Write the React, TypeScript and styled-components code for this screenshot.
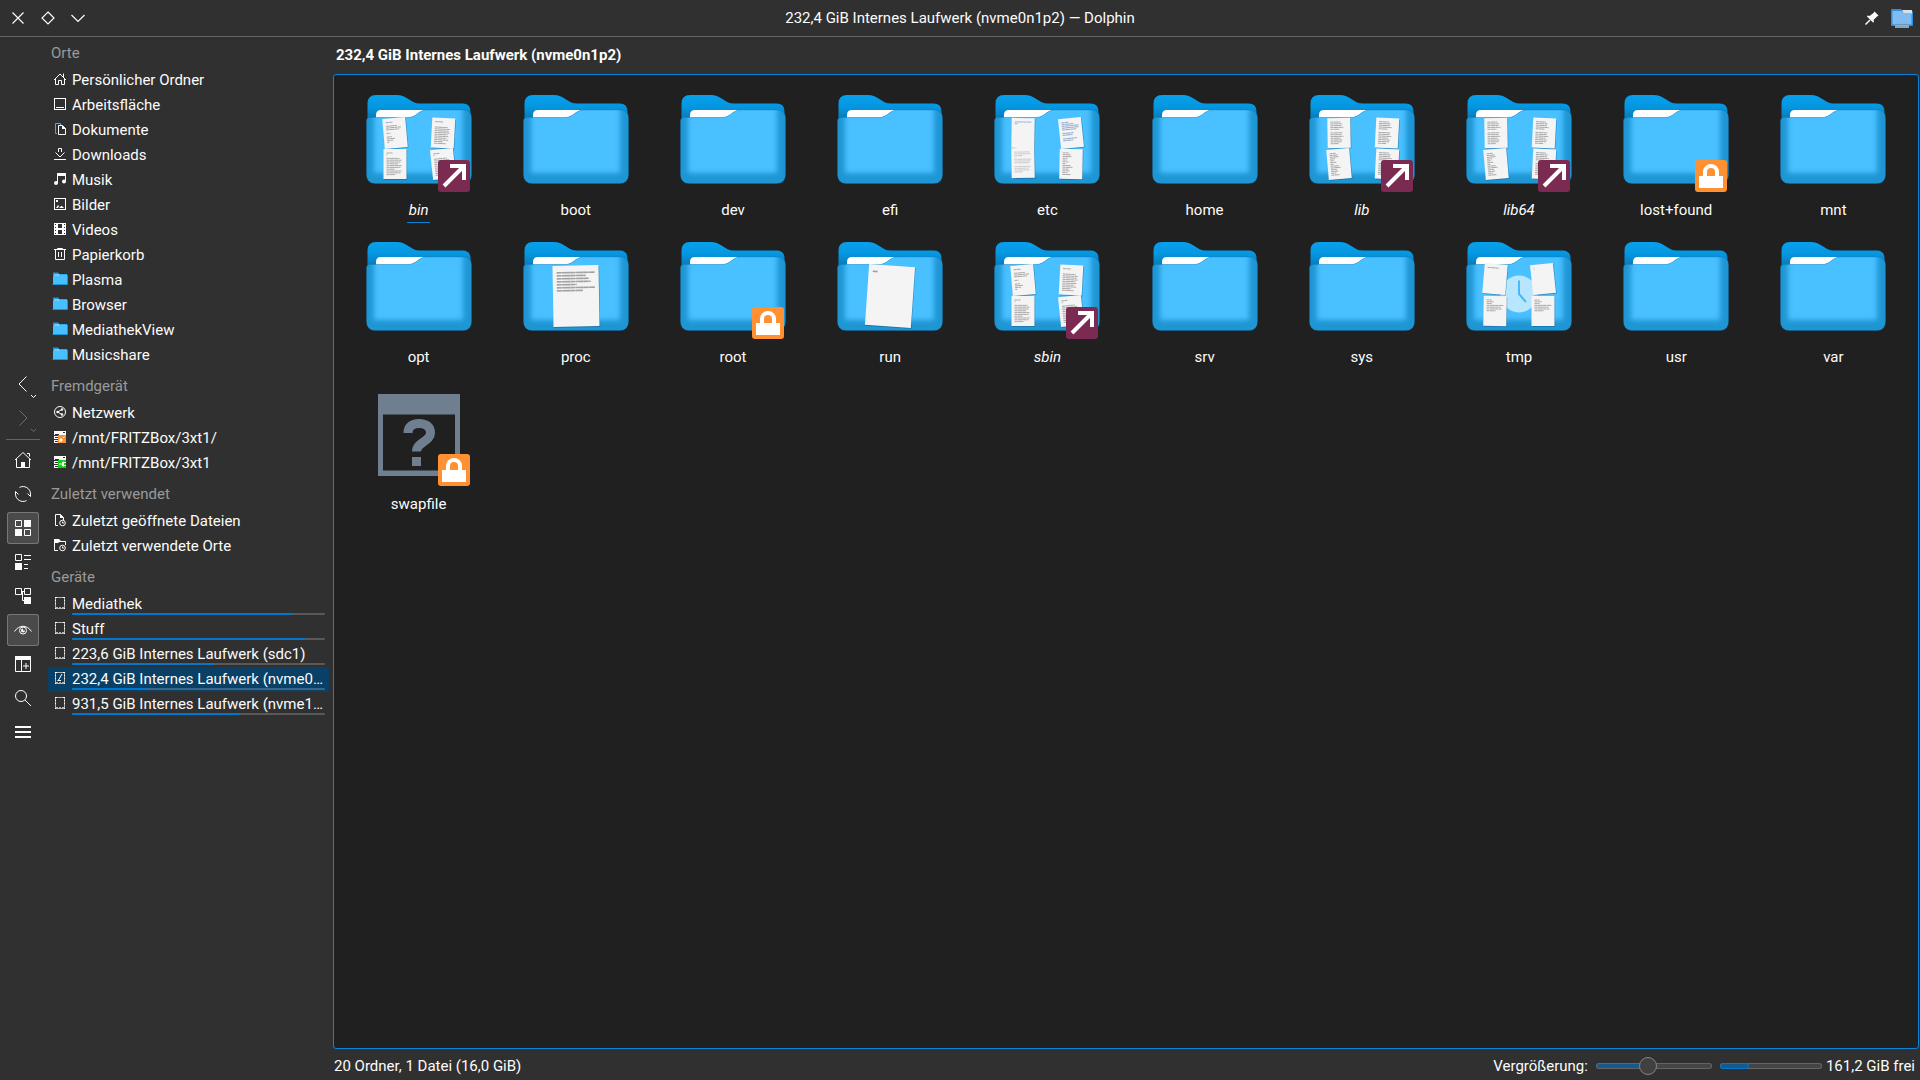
import React, { useState } from "react";
import styled, { createGlobalStyle, css } from "styled-components";

const color = {
  window: "#303030",
  view: "#202020",
  line: "#646464",
  text: "#fcfcfc",
  muted: "#9a9a9a",
  accent: "#0078d0",
  focus: "#0a84d8",
  selected: "#0a3f66",
};

const GlobalStyle = createGlobalStyle`
  * { box-sizing: border-box; }
  html, body, #root { height: 100%; }
  body {
    margin: 0;
    background: ${color.window};
    color: ${color.text};
    font-family: Roboto, "Noto Sans", sans-serif;
    font-size: 15px;
    line-height: 18px;
  }
  button, input { font: inherit; color: inherit; }
  svg { display: block; flex: none; }
`;

const Window = styled.div`
  display: flex;
  flex-direction: column;
  height: 100vh;
  overflow: hidden;
  background: ${color.window};
`;

const TitleBar = styled.header`
  display: grid;
  grid-template-columns: 1fr auto 1fr;
  align-items: center;
  height: 37px;
  flex: none;
  padding: 0 3px;
  border-bottom: 1px solid ${color.line};
`;

const TitleGroup = styled.div<{ $end?: boolean }>`
  display: flex;
  justify-content: ${(p) => (p.$end ? "flex-end" : "flex-start")};
`;

const TitleText = styled.h1`
  margin: 0;
  font-size: 15px;
  font-weight: 400;
`;

const TitleButton = styled.button`
  display: grid;
  place-items: center;
  width: 30px;
  height: 30px;
  padding: 0;
  border: 0;
  background: none;
`;

const Body = styled.div`
  display: flex;
  flex: 1;
  min-height: 0;
`;

const ToolBar = styled.div`
  display: flex;
  flex-direction: column;
  align-items: center;
  justify-content: center;
  gap: 2px;
  width: 46px;
  flex: none;
  padding-bottom: 1px;
`;

const ToolButton = styled.button<{ $checked?: boolean }>`
  display: grid;
  place-items: center;
  width: 32px;
  height: 32px;
  padding: 0;
  border: 0;
  border-radius: 3px;
  background: none;
  ${(p) =>
    p.$checked &&
    css`
      background: #4a4a4a;
      box-shadow: inset 0 0 0 1px #777;
    `}
  &:disabled { opacity: 0.3; }
`;

const ToolSeparator = styled.hr`
  width: 34px;
  height: 1px;
  margin: 3px 0 2px;
  border: 0;
  background: ${color.line};
`;

const Places = styled.nav`
  display: flex;
  flex-direction: column;
  gap: 8px;
  width: 281px;
  flex: none;
  margin: 0 4px 0 2px;
  padding-top: 6px;
`;

const SectionTitle = styled.h2`
  margin: 0 0 5px;
  padding-left: 3px;
  font-size: 15px;
  font-weight: 400;
  line-height: 20px;
  color: ${color.muted};
`;

const PlaceList = styled.ul`
  margin: 0;
  padding: 0;
  list-style: none;
`;

const PlaceLink = styled.a<{ $selected?: boolean }>`
  display: flex;
  gap: 4px;
  height: 25px;
  padding: 3px 4px 0;
  color: inherit;
  text-decoration: none;
  background: ${(p) => (p.$selected ? color.selected : "transparent")};
`;

const PlaceBody = styled.span`
  flex: 1;
  min-width: 0;
`;

const PlaceName = styled.span`
  display: block;
  white-space: nowrap;
`;

const UsageTrack = styled.span<{ $selected?: boolean }>`
  display: block;
  height: 2px;
  border-radius: 1px;
  overflow: hidden;
  background: ${(p) => (p.$selected ? "#3b6585" : "#595959")};
`;

const UsageFill = styled.span`
  display: block;
  height: 100%;
  background: ${color.accent};
`;

const Main = styled.main`
  display: flex;
  flex-direction: column;
  flex: 1;
  min-width: 0;
  padding-right: 1px;
`;

const Location = styled.h2`
  margin: 0;
  padding: 9px 3px 10px;
  font-size: 15px;
  font-weight: 700;
`;

const FileView = styled.section`
  display: grid;
  grid-template-columns: repeat(auto-fill, minmax(150px, 1fr));
  align-content: start;
  justify-items: center;
  row-gap: 7px;
  flex: 1;
  min-height: 0;
  padding: 8px 6px;
  border: 1px solid ${color.focus};
  border-radius: 3px;
  background: ${color.view};
`;

const FileItem = styled.button`
  display: flex;
  flex-direction: column;
  align-items: center;
  gap: 6px;
  padding: 0;
  border: 0;
  background: none;
`;

const FileName = styled.span<{ $link?: boolean; $current?: boolean }>`
  padding: 0 2px 3px;
  border-bottom: 1px solid ${(p) => (p.$current ? color.focus : "transparent")};
  font-style: ${(p) => (p.$link ? "italic" : "normal")};
`;

const StatusBar = styled.footer`
  display: flex;
  align-items: center;
  gap: 8px;
  height: 31px;
  flex: none;
  padding: 2px 4px 0 1px;
`;

const StatusText = styled.span`
  flex: 1;
`;

const FreeSpace = styled.div`
  display: flex;
  align-items: center;
  gap: 4px;
`;

const ZoomSlider = styled.input<{ $fill: number }>`
  appearance: none;
  width: 116px;
  height: 18px;
  margin: 0;
  background: none;
  &::-webkit-slider-runnable-track {
    height: 6px;
    border-radius: 3px;
    box-shadow: inset 0 0 0 1px ${color.line};
    background: linear-gradient(90deg, #165a8c ${(p) => p.$fill}%, #454545 ${(p) => p.$fill}%);
  }
  &::-webkit-slider-thumb {
    appearance: none;
    width: 18px;
    height: 18px;
    margin-top: -6px;
    border: 1px solid #858585;
    border-radius: 50%;
    background: #404040;
  }
`;

const CapacityTrack = styled.div`
  width: 102px;
  height: 6px;
  border-radius: 3px;
  background: #454545;
  box-shadow: inset 0 0 0 1px ${color.line};
`;

const CapacityFill = styled.div`
  height: 100%;
  border: 1px solid ${color.accent};
  border-radius: 3px;
  background: #165a8c;
`;

/* ---------- place icons, 16px grid ---------- */

const SmallFolder = () => (
  <>
    <path d="M1 1.5h5l1.5 1.5H15v11H1z" fill="#149be0" />
    <path d="M1 5h4l1.5-1.5H15V14H1z" fill="#47c0ff" />
    <path d="M2 4h5" stroke="#d8f0fc" />
    <path d="M.5 13.5h15V4" fill="none" stroke="#1e94d2" />
  </>
);

const RackBase = () => (
  <>
    <path d="M2 2h12v4H2zM2 7h5v3H2zM2 11h5v3H2z" fill="#fcfcfc" />
    <path d="M3 5.500h4M3 8.500h3M3 12.500h3M11 3.500h2" stroke="#303030" />
  </>
);

const Drive = () => (
  <>
    <rect x="3.500" y="2.500" width="9" height="11" fill="none" stroke="#b4b4b4" />
    <path d="M4 12.500h8" stroke="#b4b4b4" />
    <path d="M3 2.500h2M11 2.500h2M3 13.500h1M12 13.500h1M3.500 5v1M3.500 8v1M12.500 5v1M12.500 8v1" stroke="#fcfcfc" />
    <path d="M6 12.500h1M9 12.500h1" stroke="#303030" />
  </>
);

const placeIcons: Record<string, React.ReactNode> = {
  home: (
    <g fill="none" stroke="#fcfcfc">
      <path d="M2 9l6-6 6 6" />
      <path d="M3.500 8v5.500h3v-4h3v4h3V8M11.500 6V2.500" />
    </g>
  ),
  desktop: (
    <g fill="none" stroke="#fcfcfc">
      <rect x="2.500" y="2.500" width="11" height="11" />
      <path d="M4 11.500h8" />
    </g>
  ),
  documents: (
    <>
      <path d="M5 12.500H3.500v-10h5V4" fill="none" stroke="#3daee9" />
      <path d="M6.500 4.500h4l3 3v6h-7z" fill="none" stroke="#fcfcfc" />
      <path d="M10 4l4 4h-4z" fill="#fcfcfc" />
    </>
  ),
  downloads: (
    <g fill="none" stroke="#fcfcfc">
      <path d="M2 13.500h12M3.500 6.500L8 11l4.500-4.500M6.500 6V2.500h3V6" />
    </g>
  ),
  music: (
    <g fill="#fcfcfc">
      <path d="M5 2h9v3H5z" />
      <path d="M5 2h1v10.500H5zM13 2h1v8.500h-1z" />
      <circle cx="4" cy="12" r="2" />
      <circle cx="12" cy="10.500" r="2" />
    </g>
  ),
  pictures: (
    <>
      <rect x="2.500" y="2.500" width="11" height="11" fill="none" stroke="#fcfcfc" />
      <path d="M4 4h2v2H4zM4 12l2-3 1 1 -1 2zM7 12l2-2 1 0 2 2z" fill="#fcfcfc" />
    </>
  ),
  videos: (
    <>
      <path d="M2 2h12v12H2z" fill="#fcfcfc" />
      <path d="M6 3h4v4H6zM6 9h4v4H6zM3 3h1v1H3zM3 6h1v1H3zM3 9h1v1H3zM3 12h1v1H3zM12 3h1v1h-1zM12 6h1v1h-1zM12 9h1v1h-1zM12 12h1v1h-1z" fill="#303030" />
    </>
  ),
  trash: (
    <g fill="none" stroke="#fcfcfc">
      <path d="M2 3.500h12M5.500 3V2.500h5V3M3.500 4v9.500h9V4M6.500 6v5M9.500 6v5" />
    </g>
  ),
  folder: <SmallFolder />,
  network: (
    <>
      <circle cx="8" cy="8" r="5.500" fill="none" stroke="#fcfcfc" />
      <path d="M10 5.500L5.500 8l4.500 2.500" fill="none" stroke="#fcfcfc" />
      <circle cx="10" cy="5.500" r="1.200" fill="#fcfcfc" />
      <circle cx="5.500" cy="8" r="1.200" fill="#fcfcfc" />
      <circle cx="10" cy="10.500" r="1.200" fill="#fcfcfc" />
    </>
  ),
  mountOff: (
    <>
      <RackBase />
      <rect x="6" y="6" width="8" height="8" fill="#ff9030" />
      <path d="M7 13l2-2M9 9.500L10.500 11 9 12.500 7.500 11zM11 9l1.500-1.500" stroke="#fcfcfc" fill="#fcfcfc" />
    </>
  ),
  mountOn: (
    <>
      <RackBase />
      <rect x="6" y="6" width="8" height="8" fill="#11d116" />
      <path d="M7 10h2M14 8.500h-3M14 11.500h-3" stroke="#fcfcfc" />
      <path d="M12 7.500v5a2.500 2.500 0 0 1 0-5z" fill="#fcfcfc" />
    </>
  ),
  recentFiles: (
    <>
      <path d="M6 13.500H3.500v-11h5l3 3V8" fill="none" stroke="#fcfcfc" />
      <path d="M8 2l4 4H8z" fill="#fcfcfc" />
      <circle cx="10.500" cy="11" r="2.800" fill="none" stroke="#fcfcfc" />
      <path d="M10.500 9.500V11H12" fill="none" stroke="#fcfcfc" />
    </>
  ),
  recentPlaces: (
    <>
      <path d="M6 13.500H2.500v-11M7 4.500h6.500V8" fill="none" stroke="#fcfcfc" />
      <path d="M2 2h5l2 2-3 2H2z" fill="#fcfcfc" />
      <circle cx="10.500" cy="11" r="2.800" fill="none" stroke="#fcfcfc" />
      <path d="M10.500 9.500V11H12" fill="none" stroke="#fcfcfc" />
    </>
  ),
  drive: <Drive />,
  rootDrive: (
    <>
      <Drive />
      <path d="M6 11l4-7M5.500 10.500H9" stroke="#fcfcfc" fill="none" />
    </>
  ),
};

const PlaceIcon = ({ name }: { name: string }) => (
  <svg width="16" height="16" viewBox="0 0 16 16" aria-hidden="true">
    {placeIcons[name]}
  </svg>
);

/* ---------- toolbar icons, 32px grid ---------- */

const Tool = ({ children }: { children: React.ReactNode }) => (
  <svg width="32" height="32" viewBox="0 0 32 32" fill="none" stroke="#fcfcfc" aria-hidden="true">
    {children}
  </svg>
);

const tools = {
  back: (
    <Tool>
      <path d="M19.500 8.500L12 16l7.500 7.500M24 27l2.500 2.500L29 27" />
    </Tool>
  ),
  forward: (
    <Tool>
      <path d="M12.500 8.500L20 16l-7.500 7.500M24 27l2.500 2.500L29 27" />
    </Tool>
  ),
  home: (
    <Tool>
      <path d="M8 16l8-7.500 8 7.500M9.500 15v8.500h13V15M20 9.500h2.500v3" />
      <path d="M14 18h4v6h-4z" fill="#fcfcfc" stroke="none" />
    </Tool>
  ),
  reload: (
    <Tool>
      <path d="M12.500 9.400A7.500 7.500 0 0 1 23.500 16v2.500M19.500 22.600A7.500 7.500 0 0 1 8.500 16v-2.500M20.500 15.500l3 3M8.500 13.500l3 3" />
    </Tool>
  ),
  icons: (
    <Tool>
      <path d="M8.500 8.500h6v6h-6zM17.500 17.500h6v6h-6z" />
      <path d="M17 8h7v7h-7zM8 17h7v7H8z" fill="#fcfcfc" stroke="none" />
    </Tool>
  ),
  compact: (
    <Tool>
      <path d="M8.500 8.500h6v6h-6zM17 9.500h7M17 13.500h7M17 18.500h4M17 22.500h4" />
      <path d="M8 17h7v7H8z" fill="#fcfcfc" stroke="none" />
    </Tool>
  ),
  tree: (
    <Tool>
      <path d="M8.500 8.500h6v6h-6zM17.500 8.500h6v6h-6zM14.500 11.500h3M15.500 12v8.500H18" />
      <path d="M17 17h7v7h-7z" fill="#fcfcfc" stroke="none" />
    </Tool>
  ),
  preview: (
    <Tool>
      <path d="M7.500 17.500c4.500-7 12.500-7 17 0" />
      <circle cx="16" cy="16.500" r="3.500" />
      <path d="M16 14.500a2 2 0 1 0 2 2h-2z" fill="#fcfcfc" stroke="none" />
    </Tool>
  ),
  split: (
    <Tool>
      <path d="M8.500 8.500h15v15h-15zM14.500 12v11M16 18h6M19 15v6" />
      <path d="M8 8h16v4H8z" fill="#fcfcfc" stroke="none" />
    </Tool>
  ),
  search: (
    <Tool>
      <circle cx="14" cy="14" r="5.500" />
      <path d="M18 18l6 6" />
    </Tool>
  ),
  menu: (
    <Tool>
      <path d="M8 11h16M8 16h16M8 21h16" strokeWidth="2" />
    </Tool>
  ),
};

/* ---------- file view icons, 112px grid ---------- */

type Sheet = { x: number; y: number; turn: number; lines: number[]; big?: boolean; ink?: string };

const FULL = [10, 12, 11, 13, 9, 0, 12, 11, 13, 10, 12, 11, 8];
const LIST = [6, 8, 9, 5, 4, 6, 3, 8, 10, 6, 7, 5, 8];
const SHORT = [7, 0, 11, 15, 13, 0, 4, 0, 5, 8, 6, 2];
const PARA = [6, 1, 0, 13, 15, 14, 12, 15, 14, 8, 15, 14, 9];

const binSheets: Sheet[] = [
  { x: 32, y: 50, turn: -5, lines: SHORT },
  { x: 80, y: 50, turn: 3, lines: [8, 0, 0, 13, 15, 14, 15, 13, 14, 12, 14, 9, 12] },
  { x: 32, y: 81, turn: 0, lines: PARA },
  { x: 80, y: 81, turn: -6, lines: PARA },
];
const libSheets: Sheet[] = [
  { x: 33, y: 50, turn: -1, lines: FULL },
  { x: 81, y: 50, turn: 3, lines: FULL },
  { x: 33, y: 81, turn: -5, lines: LIST },
  { x: 81, y: 81, turn: 3, lines: FULL },
];
const etcSheets: Sheet[] = [
  { x: 32, y: 50, turn: 1, lines: [17, 3], ink: "#8fabd0" },
  { x: 80, y: 50, turn: -6, lines: [7, 12, 17, 17, 14, 0, 11, 10, 0, 14, 10], ink: "#8aa5cd" },
  { x: 32, y: 80, turn: -1, lines: [15, 16, 8, 1, 17, 16, 15, 0, 16, 14, 15, 8], ink: "#c4c4c4" },
  { x: 80, y: 81, turn: 1, lines: LIST },
];
const tmpSheets: Sheet[] = [
  { x: 32, y: 49, turn: 5, lines: [11] },
  { x: 80, y: 49, turn: -6, lines: [1] },
  { x: 32, y: 81, turn: 1, lines: [5, 7, 5, 17, 14, 15, 9] },
  { x: 80, y: 81, turn: 0, lines: [5, 7, 5, 17, 14, 15, 9] },
];
const procSheets: Sheet[] = [
  { x: 56, y: 66, turn: -1, big: true, lines: [38, 29, 32, 34, 20, 38, 26] },
];
const runSheets: Sheet[] = [{ x: 56, y: 66, turn: 4, big: true, lines: [5] }];

const Paper = ({ x, y, turn, lines, big, ink = "#a2a2a2" }: Sheet) => {
  const w = big ? 46 : 23;
  const h = big ? 61 : 30;
  const step = big ? 3 : 1.8;
  const inset = big ? 4 : 3;
  return (
    <g transform={`translate(${x} ${y}) rotate(${turn})`}>
      <rect x={-w / 2 + 0.6} y={-h / 2 + 0.8} width={w} height={h} fill="#0b4a72" opacity="0.45" />
      <rect x={-w / 2} y={-h / 2} width={w} height={h} fill="#f4f4f4" />
      {lines.map((length, i) => (
        <path
          key={i}
          d={`M${-w / 2 + inset} ${-h / 2 + inset + (big ? 3 : 1) + i * step}h${length}`}
          stroke={ink}
          strokeWidth={big ? 1.6 : 0.9}
          strokeDasharray={big ? "5 .3 8 .2" : "3 .3 5 .2"}
        />
      ))}
    </g>
  );
};

const FRONT =
  "M3.500 43.500V38q0-3.500 3.500-3.500H45c8 0 11-7.500 18-7.500h37q8.500 0 8.500 8.500V91.500q0 9-9 9h-87q-9 0-9-9z";

const HiddenDefs = styled.svg`
  position: absolute;
`;

const FolderDefs = () => (
  <HiddenDefs width="0" height="0" aria-hidden="true">
    <defs>
      <linearGradient id="folder-back" x1="0" y1="12" x2="0" y2="36" gradientUnits="userSpaceOnUse">
        <stop offset="0" stopColor="#08a0ec" />
        <stop offset="0.5" stopColor="#0596e0" />
        <stop offset="1" stopColor="#0878b6" />
      </linearGradient>
      <clipPath id="folder-front">
        <path d={FRONT} />
      </clipPath>
      <filter id="folder-glow" x="-20%" y="-20%" width="140%" height="140%">
        <feGaussianBlur stdDeviation="2.600" />
      </filter>
    </defs>
  </HiddenDefs>
);

const FolderArt = ({ sheets, clock }: { sheets?: Sheet[]; clock?: boolean }) => (
  <>
    <path
      d="M4.500 44V20.500q0-8.500 8.500-8.500H33c12 0 14 8.500 24 8.500h42.500q8 0 8 8V60h-103z"
      fill="url(#folder-back)"
    />
    <path d="M13 38v-6q0-5 5-5h47v11z" fill="#fff" />
    <path d={FRONT} fill="#1f96d4" />
    <g clipPath="url(#folder-front)">
      <rect x="11" y="10" width="89" height="80" fill="#49c0ff" filter="url(#folder-glow)" />
    </g>
    <path d={FRONT} fill="none" stroke="#0d74ad" strokeOpacity="0.5" strokeWidth="0.6" />
    {clock && (
      <>
        <circle cx="56" cy="64" r="18.500" fill="#b8e6ff" />
        <path d="M56 50.500V64l7 8" fill="none" stroke="#47b9f6" strokeWidth="2" />
      </>
    )}
    {sheets?.map((sheet, i) => (
      <Paper key={i} {...sheet} />
    ))}
  </>
);

const UnknownFileArt = () => (
  <>
    <path d="M15 17h82v82H15zM20 37.500v56h72v-56z" fill="#6f7f90" fillRule="evenodd" />
    <path
      d="M45 56C45 50 49 46.500 56 46.500c7.500 0 11.500 3.500 11.500 9.500 0 8.500-14 9-14 18.500"
      fill="none"
      stroke="#6f7f90"
      strokeWidth="9"
    />
    <path d="M49 80h9v9h-9z" fill="#6f7f90" />
  </>
);

const LinkEmblem = () => (
  <g transform="translate(75 77)">
    <rect width="32" height="32" rx="3" fill="#7b2a52" />
    <path d="M6 26L24.500 7.500M12 6h14v14" fill="none" stroke="#fff" strokeWidth="4" />
  </g>
);

const LockEmblem = () => (
  <g transform="translate(75 77)">
    <rect width="32" height="32" rx="3" fill="#ff9132" />
    <path d="M10 17v-5a6 6 0 0 1 12 0v5" fill="none" stroke="#fff" strokeWidth="4" />
    <path d="M4 16h24v12H4z" fill="#fff" />
  </g>
);

/* ---------- data ---------- */

type FileEntry = {
  name: string;
  link?: boolean;
  locked?: boolean;
  file?: boolean;
  clock?: boolean;
  sheets?: Sheet[];
};

const entries: FileEntry[] = [
  { name: "bin", link: true, sheets: binSheets },
  { name: "boot" },
  { name: "dev" },
  { name: "efi" },
  { name: "etc", sheets: etcSheets },
  { name: "home" },
  { name: "lib", link: true, sheets: libSheets },
  { name: "lib64", link: true, sheets: libSheets },
  { name: "lost+found", locked: true },
  { name: "mnt" },
  { name: "opt" },
  { name: "proc", sheets: procSheets },
  { name: "root", locked: true },
  { name: "run", sheets: runSheets },
  { name: "sbin", link: true, sheets: binSheets },
  { name: "srv" },
  { name: "sys" },
  { name: "tmp", clock: true, sheets: tmpSheets },
  { name: "usr" },
  { name: "var" },
  { name: "swapfile", file: true, locked: true },
];

type Place = { name: string; icon: string; used?: number; selected?: boolean };

const sections: { title: string; places: Place[] }[] = [
  {
    title: "Orte",
    places: [
      { name: "Persönlicher Ordner", icon: "home" },
      { name: "Arbeitsfläche", icon: "desktop" },
      { name: "Dokumente", icon: "documents" },
      { name: "Downloads", icon: "downloads" },
      { name: "Musik", icon: "music" },
      { name: "Bilder", icon: "pictures" },
      { name: "Videos", icon: "videos" },
      { name: "Papierkorb", icon: "trash" },
      { name: "Plasma", icon: "folder" },
      { name: "Browser", icon: "folder" },
      { name: "MediathekView", icon: "folder" },
      { name: "Musicshare", icon: "folder" },
    ],
  },
  {
    title: "Fremdgerät",
    places: [
      { name: "Netzwerk", icon: "network" },
      { name: "/mnt/FRITZBox/3xt1/", icon: "mountOff" },
      { name: "/mnt/FRITZBox/3xt1", icon: "mountOn" },
    ],
  },
  {
    title: "Zuletzt verwendet",
    places: [
      { name: "Zuletzt geöffnete Dateien", icon: "recentFiles" },
      { name: "Zuletzt verwendete Orte", icon: "recentPlaces" },
    ],
  },
  {
    title: "Geräte",
    places: [
      { name: "Mediathek", icon: "drive", used: 87 },
      { name: "Stuff", icon: "drive", used: 92 },
      { name: "223,6 GiB Internes Laufwerk (sdc1)", icon: "drive", used: 56 },
      { name: "232,4 GiB Internes Laufwerk (nvme0…", icon: "rootDrive", used: 29, selected: true },
      { name: "931,5 GiB Internes Laufwerk (nvme1…", icon: "drive", used: 66 },
    ],
  },
];

const PlaceRow = ({ name, icon, used, selected }: Place) => (
  <li>
    <PlaceLink href="#" $selected={selected} aria-current={selected ? "page" : undefined}>
      <PlaceIcon name={icon} />
      <PlaceBody>
        <PlaceName>{name}</PlaceName>
        {used !== undefined && (
          <UsageTrack $selected={selected}>
            <UsageFill style={{ width: `${used}%` }} />
          </UsageTrack>
        )}
      </PlaceBody>
    </PlaceLink>
  </li>
);

const Entry = ({ entry, current }: { entry: FileEntry; current: boolean }) => (
  <FileItem type="button">
    <svg width="112" height="112" viewBox="0 0 112 112" aria-hidden="true">
      {entry.file ? <UnknownFileArt /> : <FolderArt sheets={entry.sheets} clock={entry.clock} />}
      {entry.link && <LinkEmblem />}
      {entry.locked && <LockEmblem />}
    </svg>
    <FileName $link={entry.link} $current={current}>
      {entry.name}
    </FileName>
  </FileItem>
);

export default function App() {
  const [zoom, setZoom] = useState(7);

  return (
    <Window>
      <GlobalStyle />
      <FolderDefs />
      <TitleBar>
        <TitleGroup>
          <TitleButton type="button" aria-label="Schließen">
            <svg width="16" height="16" viewBox="0 0 16 16" fill="none" stroke="#fcfcfc" strokeWidth="1.200">
              <path d="M2.500 2.500l11 11M13.500 2.500l-11 11" />
            </svg>
          </TitleButton>
          <TitleButton type="button" aria-label="Maximieren">
            <svg width="16" height="16" viewBox="0 0 16 16" fill="none" stroke="#fcfcfc" strokeWidth="1.200">
              <path d="M8 2l6 6-6 6-6-6z" />
            </svg>
          </TitleButton>
          <TitleButton type="button" aria-label="Minimieren">
            <svg width="16" height="16" viewBox="0 0 16 16" fill="none" stroke="#fcfcfc" strokeWidth="1.200">
              <path d="M1.500 5L8 11.500 14.500 5" />
            </svg>
          </TitleButton>
        </TitleGroup>
        <TitleText>232,4 GiB Internes Laufwerk (nvme0n1p2) — Dolphin</TitleText>
        <TitleGroup $end>
          <TitleButton type="button" aria-label="Anheften">
            <svg width="16" height="16" viewBox="0 0 16 16">
              <path d="M10.500 1.500l4 4-1.500 1-3.500 3.500.5 2-1 .5-6-6 .5-1 2 .5L9.500 3z" fill="#fcfcfc" />
              <path d="M6 10l-4.500 4.500" stroke="#fcfcfc" strokeWidth="1.500" />
            </svg>
          </TitleButton>
          <TitleButton type="button" aria-label="Fenstermenü">
            <svg width="24" height="24" viewBox="0 0 24 24">
              <path d="M1 4q0-1 1-1h9l2 2h9q1 0 1 1v13q0 1-1 1H2q-1 0-1-1z" fill="#2e8ede" />
              <path d="M12 4h10v4H14z" fill="#dcdfe6" />
              <path d="M2.500 5h9l2 2h8v11.500h-19z" fill="#7dbdf2" />
              <path d="M5 16h14v6H5z" fill="#8fb4d2" opacity="0.9" />
              <path d="M5 18.500h14" stroke="#5c9cd4" />
            </svg>
          </TitleButton>
        </TitleGroup>
      </TitleBar>

      <Body>
        <ToolBar role="toolbar" aria-label="Hauptwerkzeugleiste">
          <ToolButton type="button" aria-label="Zurück">{tools.back}</ToolButton>
          <ToolButton type="button" aria-label="Vorwärts" disabled>{tools.forward}</ToolButton>
          <ToolSeparator />
          <ToolButton type="button" aria-label="Persönlicher Ordner">{tools.home}</ToolButton>
          <ToolButton type="button" aria-label="Aktualisieren">{tools.reload}</ToolButton>
          <ToolButton type="button" aria-label="Symbole" $checked>{tools.icons}</ToolButton>
          <ToolButton type="button" aria-label="Kompakt">{tools.compact}</ToolButton>
          <ToolButton type="button" aria-label="Details">{tools.tree}</ToolButton>
          <ToolButton type="button" aria-label="Vorschau" $checked>{tools.preview}</ToolButton>
          <ToolButton type="button" aria-label="Teilen">{tools.split}</ToolButton>
          <ToolButton type="button" aria-label="Suchen">{tools.search}</ToolButton>
          <ToolButton type="button" aria-label="Menü">{tools.menu}</ToolButton>
        </ToolBar>

        <Places aria-label="Orte">
          {sections.map((section) => (
            <div key={section.title}>
              <SectionTitle>{section.title}</SectionTitle>
              <PlaceList>
                {section.places.map((place) => (
                  <PlaceRow key={place.name} {...place} />
                ))}
              </PlaceList>
            </div>
          ))}
        </Places>

        <Main>
          <Location>232,4 GiB Internes Laufwerk (nvme0n1p2)</Location>
          <FileView aria-label="Dateien">
            {entries.map((entry, i) => (
              <Entry key={entry.name} entry={entry} current={i === 0} />
            ))}
          </FileView>
          <StatusBar>
            <StatusText>20 Ordner, 1 Datei (16,0 GiB)</StatusText>
            <label htmlFor="zoom">Vergrößerung:</label>
            <ZoomSlider
              id="zoom"
              type="range"
              min={0}
              max={16}
              value={zoom}
              $fill={(zoom / 16) * 100}
              onChange={(e) => setZoom(Number(e.target.value))}
            />
            <FreeSpace>
              <CapacityTrack>
                <CapacityFill style={{ width: "29%" }} />
              </CapacityTrack>
              <span>161,2 GiB frei</span>
            </FreeSpace>
          </StatusBar>
        </Main>
      </Body>
    </Window>
  );
}
